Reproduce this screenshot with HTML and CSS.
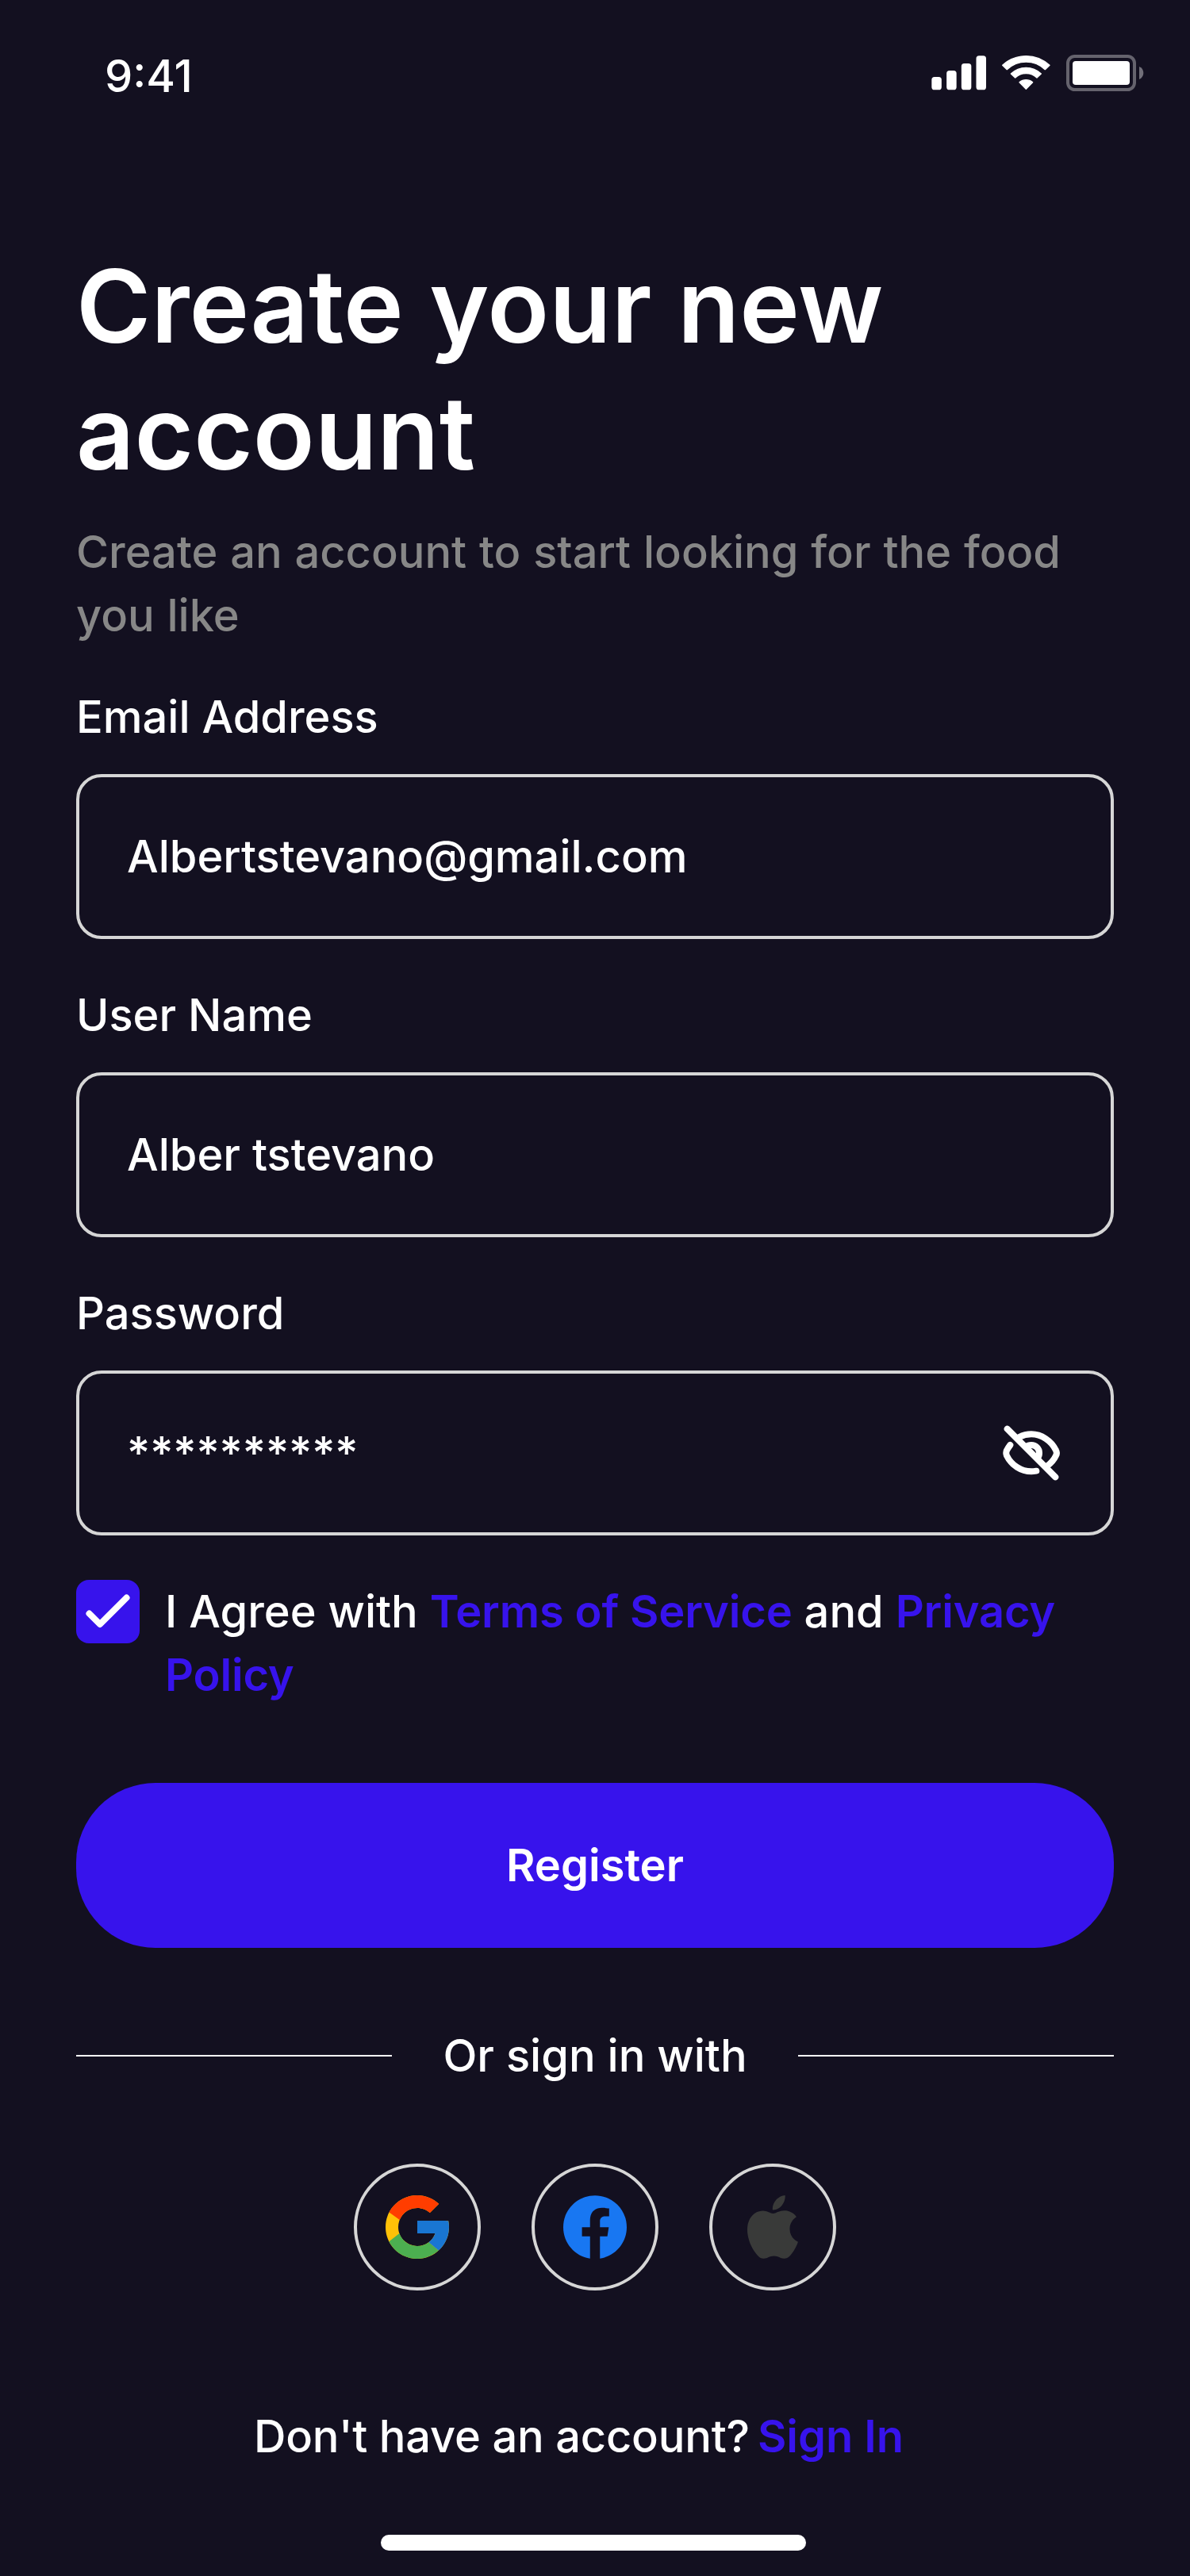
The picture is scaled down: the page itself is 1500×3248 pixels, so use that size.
FILE: index.html
```html
<!DOCTYPE html>
<html lang="en">
<head>
<meta charset="utf-8">
<title>Create your new account</title>
<link rel="stylesheet" href="styles.css">
</head>
<body>
<div class="screen">
  <header class="status-bar">
    <span class="time">9:41</span>
    <div class="status-icons">
      <svg width="69" height="46" viewBox="72 57 207 138" fill="#fff">
        <rect x="73" y="141" width="37.500" height="49" rx="11"/>
        <rect x="129.500" y="117" width="37.500" height="73" rx="11"/>
        <rect x="185.500" y="90" width="37.500" height="100" rx="11"/>
        <rect x="241.500" y="61" width="37.500" height="129" rx="11"/>
      </svg>
      <svg width="63" height="46" viewBox="336 57 189 138" fill="#fff" stroke="#fff" stroke-width="4" stroke-linejoin="round">
        <path d="M341 97A130 130 0 0 1 519 97L502 113A104 104 0 0 0 358 113Z"/>
        <path d="M373 129A82 82 0 0 1 487 129L471 144A59 59 0 0 0 389 144Z"/>
        <path d="M405 161A39 39 0 0 1 455 161L430 187Z"/>
      </svg>
      <svg width="98" height="46" viewBox="582 57 294 138">
        <rect x="588" y="63" width="252" height="126" rx="26" fill="none" stroke="#fff" stroke-opacity=".35" stroke-width="12"/>
        <rect x="606" y="81" width="216" height="90" rx="12" fill="#fff"/>
        <path d="M858 102C868 106 874 115 874 126S868 146 858 150Z" fill="#fff" fill-opacity=".4"/>
      </svg>
    </div>
  </header>

  <main class="content">
    <h1 class="title">Create your new account</h1>
    <p class="subtitle">Create an account to start looking for the food you like</p>

    <form class="form">
      <div class="field">
        <span class="label">Email Address</span>
        <div class="input"><span>Albertstevano@gmail.com</span></div>
      </div>
      <div class="field">
        <span class="label">User Name</span>
        <div class="input"><span>Alber tstevano</span></div>
      </div>
      <div class="field">
        <span class="label">Password</span>
        <div class="input">
          <span>**********</span>
          <svg width="80" height="80" viewBox="0 0 240 240" fill="none" stroke="#fff" stroke-width="24" stroke-linecap="round" stroke-linejoin="round">
            <path d="M29 29L211 211"/>
            <path d="M74 60C88 53 104 49 120 49C158 49 196 74 213 110C217 117 217 123 213 130C206 145 196 157 180 169"/>
            <path d="M40 90C34 98 30 104 27 110C24 117 24 123 27 130C44 166 82 190 120 190C126 190 133 189 139 188"/>
            <path d="M100 97C106 92 113 90 120 90A30 30 0 0 1 150 120C150 127 148 134 143 140"/>
          </svg>
        </div>
      </div>
      <div class="agree">
        <span class="checkbox">
          <svg width="80" height="80" viewBox="0 0 80 80" fill="none" stroke="#fff" stroke-width="8" stroke-linecap="round" stroke-linejoin="round"><path d="M16.500 42.500L30 56L63.500 22.500"/></svg>
        </span>
        <p class="agree-text">I Agree with <a class="link">Terms of Service</a> and <a class="link">Privacy Policy</a></p>
      </div>
    </form>

    <button class="register" type="button">Register</button>

    <div class="divider"><span>Or sign in with</span></div>

    <div class="socials">
      <a class="social">
        <svg width="80" height="80" viewBox="4 4 40 40">
          <path fill="#FFC107" d="M43.611,20.083H42V20H24v8h11.303c-1.649,4.657-6.08,8-11.303,8c-6.627,0-12-5.373-12-12c0-6.627,5.373-12,12-12c3.059,0,5.842,1.154,7.961,3.039l5.657-5.657C34.046,6.053,29.268,4,24,4C12.955,4,4,12.955,4,24c0,11.045,8.955,20,20,20c11.045,0,20-8.955,20-20C44,22.659,43.862,21.35,43.611,20.083z"/>
          <path fill="#FF3D00" d="M6.306,14.691l6.571,4.819C14.655,15.108,18.961,12,24,12c3.059,0,5.842,1.154,7.961,3.039l5.657-5.657C34.046,6.053,29.268,4,24,4C16.318,4,9.656,8.337,6.306,14.691z"/>
          <path fill="#4CAF50" d="M24,44c5.166,0,9.86-1.977,13.409-5.192l-6.19-5.238C29.211,35.091,26.715,36,24,36c-5.202,0-9.619-3.317-11.283-7.946l-6.522,5.025C9.505,39.556,16.227,44,24,44z"/>
          <path fill="#1976D2" d="M43.611,20.083H42V20H24v8h11.303c-0.792,2.237-2.231,4.166-4.087,5.571c0.001-0.001,0.002-0.001,0.003-0.002l6.19,5.238C36.971,39.205,44,34,44,24C44,22.659,43.862,21.35,43.611,20.083z"/>
        </svg>
      </a>
      <a class="social">
        <svg width="80" height="80" viewBox="0 0.073 24 23.900">
          <path fill="#1877F2" d="M24 12.073c0-6.627-5.373-12-12-12s-12 5.373-12 12c0 5.99 4.388 10.954 10.125 11.854v-8.385H7.078v-3.47h3.047V9.43c0-3.007 1.792-4.669 4.533-4.669 1.312 0 2.686.235 2.686.235v2.953H15.83c-1.491 0-1.956.925-1.956 1.874v2.25h3.328l-.532 3.47h-2.796v8.385C19.612 23.027 24 18.062 24 12.073z"/>
        </svg>
      </a>
      <a class="social">
        <svg width="64" height="80" viewBox="0 0 256 315" preserveAspectRatio="none">
          <path fill="#393A39" d="M213.803 167.03c.442 47.58 41.74 63.413 42.197 63.615-.35 1.116-6.599 22.563-21.757 44.716-13.104 19.153-26.705 38.235-48.13 38.63-21.05.388-27.82-12.483-51.888-12.483-24.061 0-31.582 12.088-51.51 12.871-20.68.783-36.428-20.71-49.64-39.793-27-39.033-47.633-110.3-19.928-158.406 13.763-23.89 38.36-39.017 65.056-39.405 20.307-.387 39.475 13.662 51.889 13.662 12.406 0 35.699-16.895 60.186-14.414 10.25.427 39.026 4.14 57.503 31.186-1.49.923-34.335 20.044-33.978 59.822M174.24 50.199c10.98-13.29 18.369-31.79 16.353-50.199-15.826.636-34.962 10.546-46.314 23.828-10.173 11.763-19.08 30.589-16.678 48.633 17.64 1.365 35.66-8.964 46.64-22.262"/>
        </svg>
      </a>
    </div>

    <p class="signin"><span>Don't have an account?</span><a class="signin-link">Sign In</a></p>
  </main>
  <div class="home-indicator"></div>
</div>
</body>
</html>
```
FILE: styles.css
```css
* { box-sizing: border-box; }

body {
  margin: 0;
  background: #131020;
  color: #fff;
  font-family: Inter, "Liberation Sans", sans-serif;
  font-size: 56px;
  line-height: 80px;
  font-weight: 500;
}

h1, p { margin: 0; }
svg { display: block; flex: none; }

.screen {
  width: 1500px;
  height: 3248px;
  display: flex;
  flex-direction: column;
}

.status-bar {
  height: 306px;
  padding: 56px 58px 0 132px;
  display: flex;
  justify-content: space-between;
  align-items: flex-start;
}
.status-icons {
  display: flex;
  gap: 19px;
  padding-top: 13px;
}

.content {
  padding: 0 96px;
  display: flex;
  flex-direction: column;
}

.title {
  font-size: 128px;
  line-height: 160px;
  font-weight: 600;
  letter-spacing: 0.08px;
}
.subtitle {
  margin-top: 30px;
  color: #878787;
  word-spacing: 0.9px;
}

.form {
  margin-top: 48px;
  display: flex;
  flex-direction: column;
  gap: 56px;
}
.field {
  display: flex;
  flex-direction: column;
  gap: 32px;
}
.input {
  height: 208px;
  padding: 0 60px;
  border: 4px solid #d6d6d6;
  border-radius: 32px;
  display: flex;
  align-items: center;
  justify-content: space-between;
}

.agree {
  display: flex;
  gap: 32px;
}
.checkbox {
  flex: none;
  width: 80px;
  height: 80px;
  border-radius: 16px;
  background: #3713ec;
}
.link {
  color: #3713ec;
  font-weight: 600;
  letter-spacing: -0.17px;
}

.register {
  margin-top: 96px;
  height: 208px;
  border: 0;
  border-radius: 100px;
  background: #3713ec;
  color: #fff;
  font: inherit;
  font-weight: 600;
}

.divider {
  margin-top: 96px;
  display: flex;
  align-items: center;
  gap: 64px;
}
.divider::before,
.divider::after {
  content: "";
  flex: 1;
  height: 2px;
  background: #fff;
}

.socials {
  margin-top: 96px;
  display: flex;
  justify-content: center;
  gap: 64px;
}
.social {
  width: 160px;
  height: 160px;
  border: 4px solid #d6d6d6;
  border-radius: 50%;
  display: flex;
  align-items: center;
  justify-content: center;
}

.signin {
  margin: 144px 0 0 224px;
  display: flex;
  gap: 10px;
  white-space: nowrap;
  letter-spacing: -0.2px;
}
.signin-link {
  color: #3713ec;
  font-weight: 600;
  letter-spacing: 0;
}

.home-indicator {
  width: 536px;
  height: 20px;
  margin: auto 0 32px 480px;
  border-radius: 10px;
  background: #fff;
}
```
